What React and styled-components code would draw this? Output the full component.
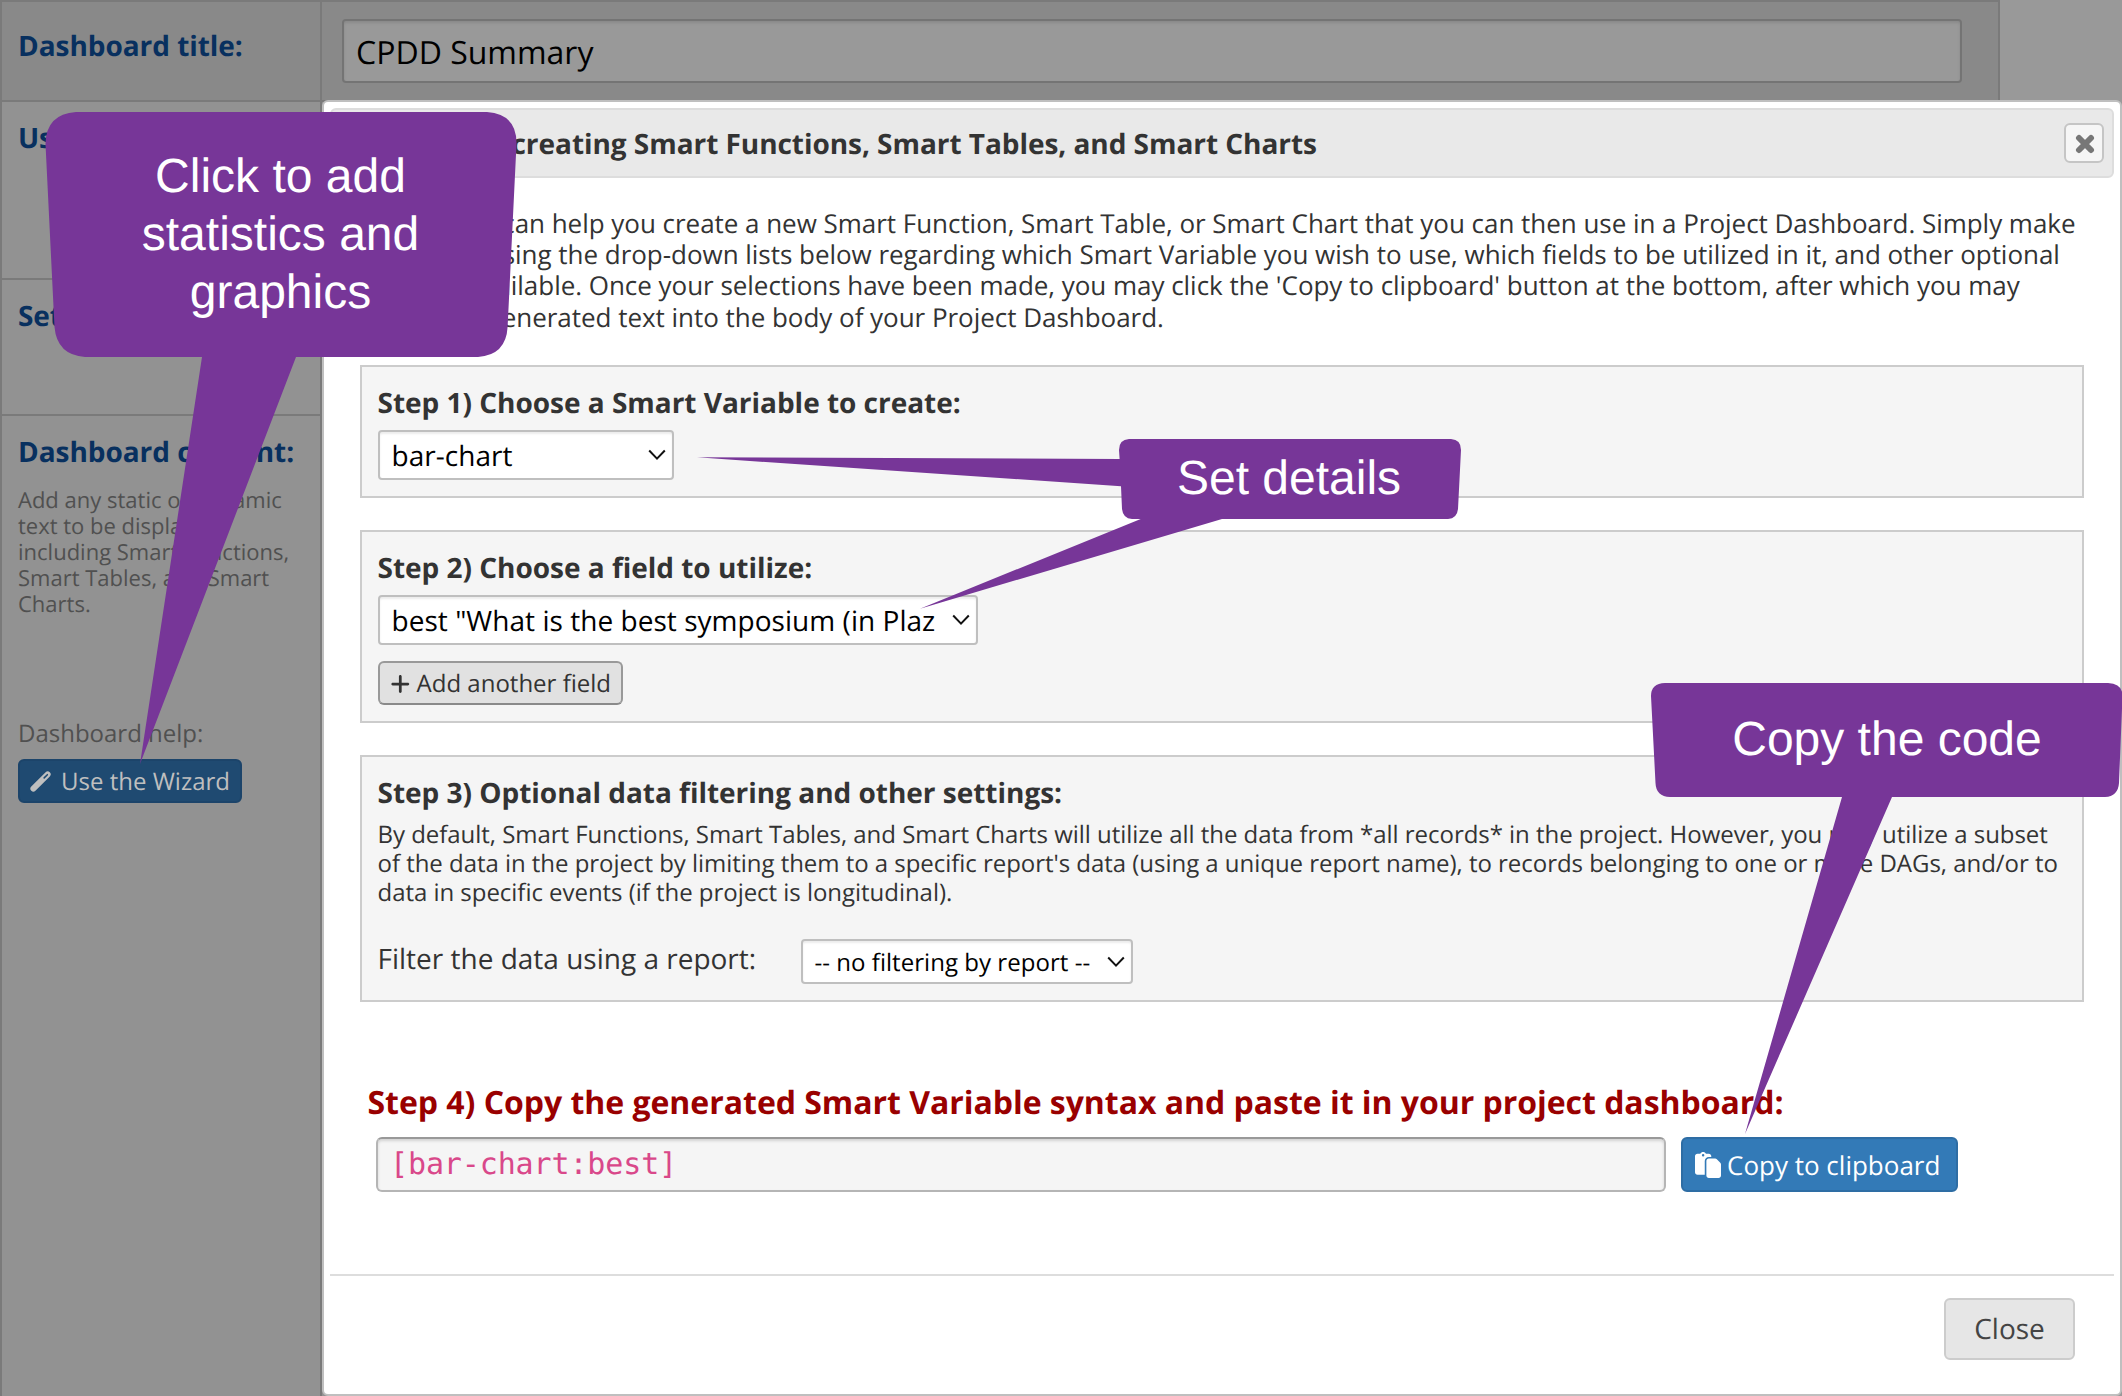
import React from "react";
import styled, { createGlobalStyle } from "styled-components";
import { FaPaste, FaPlus } from "react-icons/fa6";

const Global = createGlobalStyle`
  * { box-sizing: border-box; }
  html, body { margin: 0; padding: 0; height: 1396px; overflow: hidden; }
  body {
    background: #999;
    color: #333;
    font-family: "Open Sans", "Noto Sans", sans-serif;
    font-size: 26px;
    text-rendering: geometricPrecision;
  }
`;

const Page = styled.div`
  position: relative;
  width: 2122px;
  height: 1396px;
  overflow: hidden;
  background: #999;
`;

const FormTable = styled.div`
  display: grid;
  grid-template-columns: 320px 1fr;
  grid-template-rows: 100px 178px 136px 1fr;
  width: 2000px;
  height: 1400px;
  border: 2px solid #7a7a7a;
  background: #929292;
`;

const LabelCell = styled.div`
  border-right: 2px solid #7a7a7a;
  border-bottom: 2px solid #7a7a7a;
  padding: ${(p) => p.$top}px 16px 0;
  background: ${(p) => (p.$head ? "#898989" : "#929292")};
`;

const ValueCell = styled.div`
  border-bottom: 2px solid #7a7a7a;
  padding: 17px 36px 0 20px;
  background: ${(p) => (p.$head ? "#898989" : "#929292")};
`;

const Label = styled.div`
  color: #08305f;
  font-size: 28px;
  font-weight: 700;
  letter-spacing: -0.05px;
  line-height: 38px;
  white-space: nowrap;
`;

const TitleInput = styled.div`
  height: 64px;
  padding: 0 12px;
  border: 2px solid #747474;
  border-radius: 4px;
  background: #999;
  box-shadow: inset 0 2px 3px rgba(0, 0, 0, 0.1);
  color: #000;
  font-size: 32px;
  line-height: 63px;
`;

const Hint = styled.p`
  margin: 16px 0 0;
  color: #505050;
  font-size: 22px;
  line-height: 26px;
  white-space: nowrap;
`;

const HelpLabel = styled.div`
  margin-top: 100px;
  color: #505050;
  font-size: 24px;
  line-height: 34px;
`;

const WizardButton = styled.div`
  display: flex;
  align-items: center;
  gap: 10px;
  width: 224px;
  height: 44px;
  margin-top: 8px;
  padding: 1px 10px 0;
  border: 2px solid #1c446a;
  border-radius: 6px;
  background: #1f4a71;
  color: #bfbfbf;
  font-size: 24px;
  line-height: 40px;
  white-space: nowrap;
`;

const Dialog = styled.section`
  position: absolute;
  left: 322px;
  top: 100px;
  display: flex;
  flex-direction: column;
  width: 1800px;
  height: 1296px;
  padding: 6px;
  border: 2px solid #bfbfbf;
  border-radius: 6px;
  background: #fff;
`;

const TitleBar = styled.header`
  display: flex;
  align-items: center;
  justify-content: space-between;
  height: 70px;
  padding: 0 8px 0 28px;
  border: 2px solid #ddd;
  border-radius: 6px;
  background: #e9e9e9;
`;

const DialogTitle = styled.h1`
  margin: 0;
  padding-top: 2px;
  font-size: 28px;
  font-weight: 700;
  letter-spacing: -0.05px;
  line-height: 38px;
  white-space: nowrap;
`;

const CloseIcon = styled.div`
  display: flex;
  align-items: center;
  justify-content: center;
  width: 40px;
  height: 40px;
  padding: 1px 0 0 1px;
  border: 2px solid #c5c5c5;
  border-radius: 6px;
  background: #f6f6f6;
`;

const Body = styled.div`
  display: flex;
  flex-direction: column;
  height: 1096px;
  padding: 30px 30px 0;
`;

const Intro = styled.div`
  height: 125px;
  font-size: 26px;
  letter-spacing: -0.032px;
  line-height: 31.2px;
  white-space: nowrap;
`;

const IntroLine = styled.div`
  padding-left: ${(p) => p.$indent || 0}px;
`;

const Step = styled.div`
  height: ${(p) => p.$h}px;
  margin-top: 32px;
  padding: 17px 15.5px 0;
  border: 2px solid #ccc;
  background: #f5f5f5;
`;

const StepTitle = styled.h2`
  margin: 0;
  font-size: 28px;
  font-weight: 700;
  letter-spacing: -0.02px;
  line-height: 38px;
`;

const SelectFrame = styled.div`
  display: flex;
  align-items: center;
  justify-content: space-between;
  width: ${(p) => p.$w}px;
  height: ${(p) => p.$h || 50}px;
  margin: ${(p) => p.$mt || 0}px 0 0 0.5px;
  padding: 0 6px 0 11.5px;
  border: 2px solid #bfbfbf;
  border-radius: 4px;
  background: #fff;
  box-shadow: inset 0 2px 2px rgba(0, 0, 0, 0.08);
  color: #000;
  font-size: ${(p) => p.$fs || 28}px;
  letter-spacing: 0.04px;
  line-height: 38px;
  white-space: nowrap;
`;

const SelectValue = styled.span`
  padding-top: 2px;
`;

const AddButton = styled.div`
  display: flex;
  align-items: center;
  gap: 6px;
  width: 245px;
  height: 44px;
  margin: 16px 0 0 0.5px;
  padding: 1px 10px 0;
  border: 2px solid #999;
  border-bottom-color: #8a8a8a;
  border-radius: 6px;
  background: #e1e1e1;
  font-size: 24px;
  line-height: 40px;
  white-space: nowrap;
`;

const Note = styled.p`
  margin: 8px 0 0;
  font-size: 24px;
  letter-spacing: -0.036px;
  line-height: 29px;
  white-space: nowrap;
`;

const FilterRow = styled.div`
  display: flex;
  align-items: flex-start;
  margin-top: 32px;
`;

const FilterLabel = styled.div`
  width: 423px;
  font-size: 28px;
  line-height: 40px;
`;

const FinalTitle = styled.h2`
  margin: 79px 0 0 7.5px;
  color: #990000;
  font-size: 32px;
  font-weight: 700;
  letter-spacing: -0.035px;
  line-height: 44px;
`;

const CopyRow = styled.div`
  display: flex;
  gap: 15px;
  margin: 12px 0 0 16px;
`;

const CodeBox = styled.div`
  width: 1290px;
  height: 55px;
  padding: 0 12px;
  border: 2px solid #b5b5b5;
  border-top-color: #999;
  border-radius: 6px;
  background: #f5f5f5;
  box-shadow: inset 0 2px 3px rgba(0, 0, 0, 0.14);
  color: #d9488a;
  font-family: "DejaVu Sans Mono", monospace;
  font-size: 30px;
  letter-spacing: -0.12px;
  line-height: 52px;
`;

const CopyButton = styled.div`
  display: flex;
  align-items: center;
  gap: 6px;
  width: 277px;
  height: 55px;
  padding: 0 12px;
  border: 2px solid #2e6da4;
  border-radius: 6px;
  background: #337ab7;
  color: #fff;
  font-size: 26px;
  line-height: 50px;
  white-space: nowrap;
`;

const Footer = styled.footer`
  display: flex;
  justify-content: flex-end;
  height: 112px;
  padding: 22px 39px 0 0;
  border-top: 2px solid #ddd;
`;

const CloseButton = styled.div`
  width: 131px;
  height: 62px;
  border: 2px solid #ccc;
  border-radius: 6px;
  background: #e6e6e6;
  color: #444;
  font-size: 28px;
  line-height: 59px;
  text-align: center;
`;

const CalloutLayer = styled.svg`
  position: absolute;
  left: 0;
  top: 0;
  fill: #773698;
`;

const CalloutText = styled.div`
  position: absolute;
  left: ${(p) => p.$x}px;
  top: ${(p) => p.$y}px;
  width: ${(p) => p.$w}px;
  color: #fff;
  font-family: "Liberation Sans", Arial, sans-serif;
  font-size: 48px;
  line-height: 58px;
  text-align: center;
`;

const Chevron = () => (
  <svg width="18" height="12" viewBox="0 0 18 12" fill="none">
    <path d="M1.2 1.5 9 9.600l7.800-8.100" stroke="#111" strokeWidth="2" />
  </svg>
);

const Wand = () => (
  <svg width="25" height="25" viewBox="0 0 25 25">
    <path d="M4 21 21 4" stroke="#bfbfbf" strokeWidth="7" strokeLinecap="round" />
    <path d="M16.800 8.200 20.600 4.400" stroke="#1f4a71" strokeWidth="1.800" strokeLinecap="round" />
  </svg>
);

const Cross = () => (
  <svg width="20" height="20" viewBox="0 0 20 20">
    <path d="M4 4 16 16M16 4 4 16" stroke="#777" strokeWidth="6" strokeLinecap="round" />
  </svg>
);

const Select = ({ children, ...frame }) => (
  <SelectFrame {...frame}>
    <SelectValue>{children}</SelectValue>
    <Chevron />
  </SelectFrame>
);

export default function App() {
  return (
    <Page>
      <Global />
      <FormTable>
        <LabelCell $head $top={25}><Label>Dashboard title:</Label></LabelCell>
        <ValueCell $head><TitleInput>CPDD Summary</TitleInput></ValueCell>
        <LabelCell $top={17}><Label>User access:</Label></LabelCell>
        <ValueCell />
        <LabelCell $top={17}><Label>Set as public:</Label></LabelCell>
        <ValueCell />
        <LabelCell $top={17}>
          <Label>Dashboard content:</Label>
          <Hint>
            Add any static or dynamic<br />text to be displayed,<br />including Smart Functions,<br />
            Smart Tables, and Smart<br />Charts.
          </Hint>
          <HelpLabel>Dashboard help:</HelpLabel>
          <WizardButton><Wand />Use the Wizard</WizardButton>
        </LabelCell>
        <ValueCell />
      </FormTable>

      <Dialog>
        <TitleBar>
          <DialogTitle>Wizard for creating Smart Functions, Smart Tables, and Smart Charts</DialogTitle>
          <CloseIcon><Cross /></CloseIcon>
        </TitleBar>
        <Body>
          <Intro>
            <IntroLine $indent={-1}>This wizard can help you create a new Smart Function, Smart Table, or Smart Chart that you can then use in a Project Dashboard. Simply make</IntroLine>
            <IntroLine>selections using the drop-down lists below regarding which Smart Variable you wish to use, which fields to be utilized in it, and other optional</IntroLine>
            <IntroLine $indent={8}>settings available. Once your selections have been made, you may click the 'Copy to clipboard' button at the bottom, after which you may</IntroLine>
            <IntroLine $indent={8}>paste the generated text into the body of your Project Dashboard.</IntroLine>
          </Intro>
          <Step $h={133}>
            <StepTitle>Step 1) Choose a Smart Variable to create:</StepTitle>
            <Select $w={296} $mt={8}>bar-chart</Select>
          </Step>
          <Step $h={193}>
            <StepTitle>Step 2) Choose a field to utilize:</StepTitle>
            <Select $w={600} $mt={8}>best "What is the best symposium (in Plaz</Select>
            <AddButton><FaPlus size={22} />Add another field</AddButton>
          </Step>
          <Step $h={247}>
            <StepTitle>Step 3) Optional data filtering and other settings:</StepTitle>
            <Note>
              By default, Smart Functions, Smart Tables, and Smart Charts will utilize all the data from *all records* in the project. However, you may utilize a subset<br />
              of the data in the project by limiting them to a specific report's data (using a unique report name), to records belonging to one or more DAGs, and/or to<br />
              data in specific events (if the project is longitudinal).
            </Note>
            <FilterRow>
              <FilterLabel>Filter the data using a report:</FilterLabel>
              <Select $w={332} $h={45} $fs={24}>-- no filtering by report --</Select>
            </FilterRow>
          </Step>
          <FinalTitle>Step 4) Copy the generated Smart Variable syntax and paste it in your project dashboard:</FinalTitle>
          <CopyRow>
            <CodeBox>[bar-chart:best]</CodeBox>
            <CopyButton><FaPaste size={26} />Copy to clipboard</CopyButton>
          </CopyRow>
        </Body>
        <Footer><CloseButton>Close</CloseButton></Footer>
      </Dialog>

      <CalloutLayer width="2122" height="1396" viewBox="0 0 2122 1396">
        <path d="M76 112H487Q517 114 516.5 144L507.6 327Q506 355 478 357H296L140 764L202 357H85Q57 355 54.5 327L45.5 144Q46 114 76 112Z" />
        <path d="M1129 439H1451Q1461 439.500 1461 450L1458 509Q1457 518.500 1448 519H1222L920 608.700L1140.700 519H1132Q1123 518.500 1122 509L1121 486.300L697 457.300L1119.600 459L1119 450Q1119 439.500 1129 439Z" />
        <path d="M1665 683H2108Q2122.500 683.500 2122.500 696L2119 783Q2118 796.500 2105 797H1892L1745 1134L1842 797H1670Q1656 796.500 1655.500 783L1651 696Q1651 683.500 1665 683Z" />
      </CalloutLayer>
      <CalloutText $x={80} $y={148} $w={401}>Click to add<br />statistics and<br />graphics</CalloutText>
      <CalloutText $x={1121} $y={450} $w={336}>Set details</CalloutText>
      <CalloutText $x={1655} $y={711} $w={464}>Copy the code</CalloutText>
    </Page>
  );
}
